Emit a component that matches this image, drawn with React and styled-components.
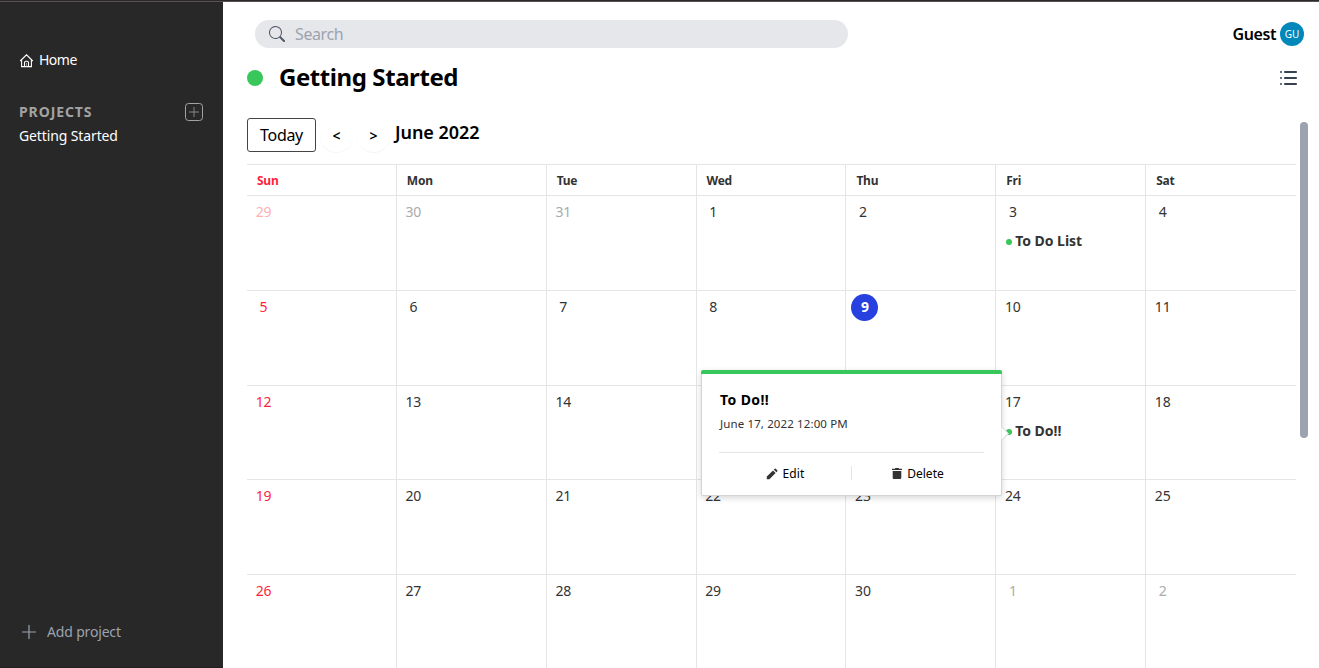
import React from "react";
import styled, { createGlobalStyle, css } from "styled-components";
import { BsSearch } from "react-icons/bs";

const Global = createGlobalStyle`
  *, *::before, *::after { box-sizing: border-box; }
  body { margin: 0; background: #fff; overflow: hidden; font-family: "Noto Sans", "Open Sans", sans-serif; color: #000; }
  button { font: inherit; color: inherit; border: 0; padding: 0; background: none; }
`;
const TopEdge = styled.div`height: 2px; background: #2b282a; border-bottom: 1px solid #565254;`;
const Page = styled.div`display: flex; height: 666px;`;
const Sidebar = styled.aside`
  width: 223px; flex: none; background: #282828; display: flex; flex-direction: column; padding: 46px 19px 0; color: #fff;
  border-bottom: 1px solid #241e21;
`;
const Line = styled.span`
  white-space: nowrap; font-size: ${(p) => p.$size || 14}px; font-weight: ${(p) => p.$weight || 400};
  letter-spacing: ${(p) => p.$track || 0}px; line-height: ${(p) => p.$lh || 24}px;
`;
const HomeLink = styled.div`display: flex; align-items: center; gap: 5px; height: 24px;`;
const ProjectsHead = styled.div`
  display: flex; align-items: center; justify-content: space-between; margin-top: 28px; height: 24px; color: #a3a3a3; padding-right: 1px;
`;
const AddProject = styled.div`
  margin-top: auto; margin-bottom: 23px; display: flex; align-items: center; gap: 11px; color: #9ca3af; height: 24px; padding-left: 3px;
`;
const Main = styled.main`flex: 1; display: flex; flex-direction: column; min-width: 0;`;
const TopBar = styled.header`
  display: flex; align-items: center; justify-content: space-between; height: 28px; margin-top: 18px; padding: 0 15px 0 32px;
`;
const SearchBox = styled.div`
  width: 593px; height: 28px; border-radius: 14px; background: #e5e7eb; color: #9ca3af;
  display: flex; align-items: center; gap: 10px; padding-left: 14px;
  svg { color: #4b5563; }
`;
const User = styled.div`display: flex; align-items: center; gap: 4px;`;
const Avatar = styled.span`
  width: 24px; height: 24px; border-radius: 50%; background: #0088bb; color: #fff; font-size: 10px; line-height: 24px; text-align: center;
`;
const TitleRow = styled.div`
  display: flex; align-items: center; height: 32px; margin-top: 14px; padding: 0 22px 0 24px;
  > svg { margin-left: auto; }
`;
const Title = styled.h1`margin: 0; display: flex; height: 26px;`;
const ProjectDot = styled.span`width: 16px; height: 16px; border-radius: 50%; background: #38c75a; margin-right: 16px;`;
const Body = styled.div`display: flex; justify-content: space-between; margin-top: 24px; padding: 0 11px 0 24px; flex: 1; min-height: 0;`;
const Calendar = styled.section`width: 1049px; height: 100%; display: flex; flex-direction: column;`;
const Controls = styled.div`display: flex; height: 34px; flex: none; align-items: center;`;
const TodayButton = styled.button`
  width: 69px; height: 34px; border: 1px solid #444; border-radius: 3px; margin-right: 4px;
`;
const RoundButton = styled.button`
  width: 33px; height: 33px; border-radius: 50%; margin-right: 4px; box-shadow: 0 1px 1px rgba(0,0,0,.045);
  font-size: 14px; font-weight: 600; line-height: 33px;
`;
const Month = styled.div`align-self: flex-start; height: 28px; display: flex; align-items: center; padding-left: 1px;`;
const Grid = styled.div`
  margin-top: 12px; display: grid; flex: none; grid-template-columns: repeat(7, 1fr);
  grid-template-rows: 31px 95px 95px 94px 95px 94px; color: #333;
`;
const tone = (p) => (p.$sun ? (p.$muted ? "#ffb0b3" : "#ff1f3d") : p.$muted ? "#ababab" : "#333");
const cell = css`
  border-top: 1px solid #e5e5e5; border-right: ${(p) => (p.$last ? 0 : 1)}px solid #e5e5e5; color: ${tone}; min-width: 0;
`;
const DayName = styled.div`${cell} padding-left: 10px; padding-top: 1px; display: flex; align-items: center;`;
const DayCell = styled.div`${cell} padding: 3px 0 0 3px;`;
const DayNumber = styled.div`
  width: 27px; height: 27px; border-radius: 50%; text-align: center; font-size: 14px; line-height: 26px;
  letter-spacing: -.2px;
  ${(p) => p.$today && css`background: #2641e0; color: #fff; font-weight: 700; margin-left: 2px;`}
`;
const Event = styled.div`
  display: flex; align-items: center; gap: 3px; height: 24px; margin: 3px 0 0 7px;
  &::before { content: ""; width: 6px; height: 6px; border-radius: 50%; background: #38c75a; margin-top: 2px; }
`;
const Popup = styled.div`
  position: absolute; left: 701px; top: 370px; width: 301px; height: 126px; background: #fff; color: #000;
  border: 1px solid #d5d5d5; border-top: 0; border-radius: 2px;
  box-shadow: 0 2px 6px rgba(0,0,0,.16); padding: 18px 17px 0; display: flex; flex-direction: column;
  &::before { content: ""; position: absolute; left: -1px; right: -1px; top: 0; height: 4px; background: #38c75a; border-radius: 2px 2px 0 0; }
`;
const PopupArrow = styled.span`
  position: absolute; right: -6px; top: 58px; width: 11px; height: 11px; background: #fff;
  clip-path: polygon(0 0, 100% 0, 100% 100%); transform: rotate(45deg);
  border: 1px solid #d5d5d5; border-left: 0; border-bottom: 0;
`;
const PopupText = styled.div`display: flex; flex-direction: column; padding-left: 1px;`;
const When = styled(Line)`color: #333;`;
const PopupActions = styled.div`
  margin-top: 16px; height: 42px; border-top: 1px solid #e5e5e5; display: flex; align-items: center;
`;
const Action = styled.button`
  flex: 1; display: flex; align-items: center; justify-content: center; gap: 5px;
  svg { color: #333; }
`;
const Divider = styled.i`width: 1px; height: 14px; background: #e5e5e5; margin-top: -2px;`;
const Scrollbar = styled.div`width: 8px; height: 316px; margin-top: 4px; border-radius: 4px; background: #9ca3af;`;

const HomeIcon = () => (
  <svg width="15" height="15" viewBox="0 0 15 15" fill="none" stroke="#fff" strokeWidth="1.1">
    <path d="M1.2 8 7.5 1.8 13.8 8M2.6 7v6.6h9.8V7M5.5 13.5V9.7q0-1.4 1.4-1.4h1.2q1.4 0 1.4 1.4v3.8" />
    <path d="M7.5 9.8v3.5" stroke="#8a8a8a" />
  </svg>
);
const BoxPlus = () => (
  <svg width="18" height="18" viewBox="0 0 18 18" fill="none" stroke="#a3a3a3">
    <rect x=".5" y=".5" width="17" height="17" rx="3" />
    <path d="M9 4v10M4 9h10" stroke="#858585" />
  </svg>
);
const Plus = () => (
  <svg width="14" height="14" viewBox="0 0 14 14" stroke="#9ca3af" strokeWidth="1.2"><path d="M7 0v14M0 7h14" /></svg>
);
const ListIcon = () => (
  <svg width="17" height="14" viewBox="0 0 17 14" fill="none" stroke="#374151" strokeWidth="2">
    <path d="M4.2 1h12.6M4.2 7h12.6M4.2 13h12.6" />
    <path d="M0 1h2M0 7h2M0 13h2" stroke="#6b7280" />
  </svg>
);
const Pencil = () => (
  <svg width="12" height="12" viewBox="0 0 12 12" fill="currentColor">
    <path d="M.8 11.2v-2.6L7 2.4 9.6 5l-6.2 6.2zM7.8 1.6l.9-.9q.5-.4 1 0l1.6 1.6q.4.5 0 1l-.9.9z" />
  </svg>
);
const Trash = () => (
  <svg width="10" height="11" viewBox="0 0 10 11" fill="currentColor">
    <path d="M3.4 0h3.2l.5.7H10V2H0V.7h2.9zM.7 3h8.6v6.8q0 1.2-1.2 1.2H1.9Q.7 11 .7 9.8z" />
  </svg>
);

const names = ["Sun", "Mon", "Tue", "Wed", "Thu", "Fri", "Sat"];
const days = Array.from({ length: 35 }, (_, i) => (i < 3 ? 29 + i : i < 33 ? i - 2 : i - 32));
const events = { 5: "To Do List", 19: "To Do!!" };

export default function App() {
  return (
    <>
      <Global />
      <TopEdge />
      <Page>
        <Sidebar>
          <HomeLink><HomeIcon /><Line $track={-0.5}>Home</Line></HomeLink>
          <ProjectsHead><Line $size={14} $weight={700} $track={0.9}>PROJECTS</Line><BoxPlus /></ProjectsHead>
          <Line $track={-0.12}>Getting Started</Line>
          <AddProject><Plus /><Line $track={-0.17}>Add project</Line></AddProject>
        </Sidebar>
        <Main>
          <TopBar>
            <SearchBox><BsSearch size={16} /><Line $size={16} $track={-0.4}>Search</Line></SearchBox>
            <User><Line $size={16} $weight={600} $track={-0.4}>Guest</Line><Avatar>GU</Avatar></User>
          </TopBar>
          <TitleRow>
            <ProjectDot />
            <Title><Line $size={24} $weight={700} $track={-0.42}>Getting Started</Line></Title>
            <ListIcon />
          </TitleRow>
          <Body>
            <Calendar>
              <Controls>
                <TodayButton><Line $size={16} $track={-0.3}>Today</Line></TodayButton>
                <RoundButton>&lt;</RoundButton><RoundButton>&gt;</RoundButton>
                <Month><Line $size={18} $weight={600} $track={-0.06}>June 2022</Line></Month>
              </Controls>
              <Grid>
                {names.map((n, i) => (
                  <DayName key={n} $sun={i === 0} $last={i === 6}><Line $size={12} $weight={700} $track={-0.25}>{n}</Line></DayName>
                ))}
                {days.map((d, i) => (
                  <DayCell key={i} $sun={i % 7 === 0} $last={i % 7 === 6} $muted={i < 3 || i > 32}>
                    <DayNumber $today={i === 11}>{d}</DayNumber>
                    {events[i] && <Event><Line $weight={700} $track={-0.05}>{events[i]}</Line></Event>}
                  </DayCell>
                ))}
              </Grid>
            </Calendar>
            <Scrollbar />
          </Body>
        </Main>
      </Page>
      <Popup>
        <PopupArrow />
        <PopupText>
          <Line $weight={700} $track={0.4}>To Do!!</Line>
          <When $size={11.5} $track={0.12}>June 17, 2022 12:00 PM</When>
        </PopupText>
        <PopupActions>
          <Action><Pencil /><Line $size={12} $track={0.1}>Edit</Line></Action>
          <Divider />
          <Action><Trash /><Line $size={12}>Delete</Line></Action>
        </PopupActions>
      </Popup>
    </>
  );
}
